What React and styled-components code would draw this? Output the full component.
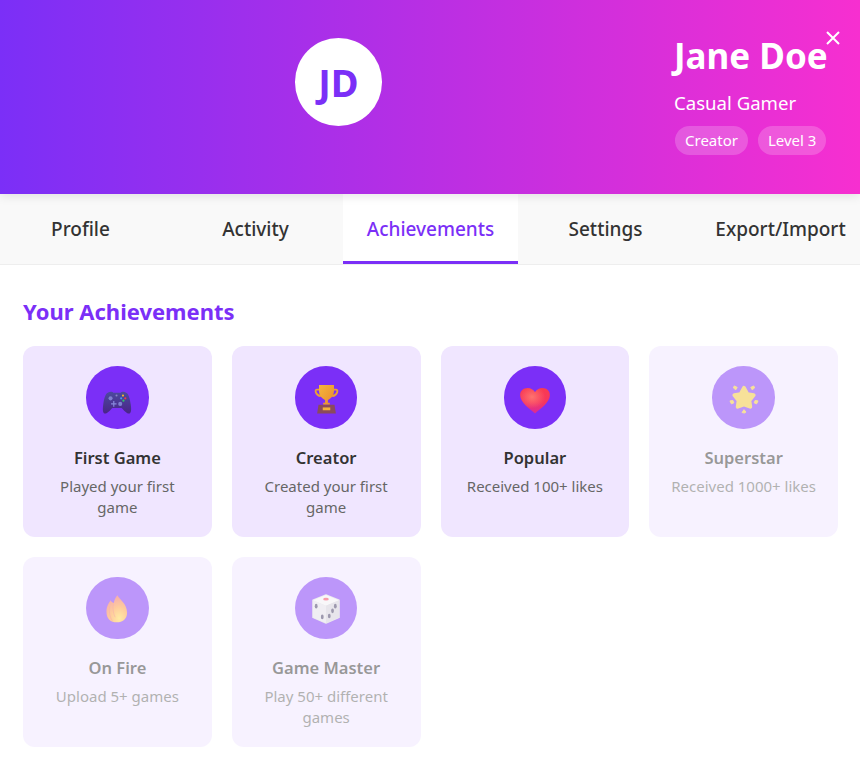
import React from 'react'
import styled, { createGlobalStyle } from 'styled-components'

const GlobalStyle = createGlobalStyle`
    html, body {
        margin: 0;
        padding: 0;
        background: #fff;
        font-family: "Noto Sans", "Open Sans", sans-serif;
    }
    * {
        box-sizing: border-box;
    }
`;

const Wrapper = styled.div`
    width: 860px;
    height: 766px;
    overflow: hidden;
    background: #fff;
`;

const Header = styled.div`
    position: relative;
    z-index: 1;
    display: flex;
    align-items: center;
    height: 194px;
    padding-right: 32px;
    color: #fff;
    background: linear-gradient(90deg, #7b2ff7, #f72fd0);
    box-shadow: 0 2px 10px rgba(0, 0, 0, 0.1);
`;

const AvatarSlot = styled.div`
    flex: 1;
    display: flex;
    justify-content: center;
    padding-left: 3px;
    padding-bottom: 30px;
`;

const Avatar = styled.div`
    display: flex;
    align-items: center;
    justify-content: center;
    width: 87.5px;
    height: 88px;
    border-radius: 50%;
    background: #fff;
    color: #7b2ff7;
    font-size: 38px;
    font-weight: 700;
`;

const Info = styled.div`
    display: flex;
    flex-direction: column;
    width: 154px;
    padding-bottom: 6px;
`;

const Name = styled.div`
    font-size: 35px;
    line-height: 46px;
    font-weight: 700;
    white-space: nowrap;
`;

const Role = styled.div`
    margin-top: 12px;
    font-size: 18.6px;
    line-height: 24px;
    white-space: nowrap;
`;

const Badges = styled.div`
    display: flex;
    gap: 10px;
    margin-top: 11px;
    padding-left: 1px;
`;

const Badge = styled.span`
    padding: 5px 10px;
    border-radius: 15px;
    background: rgba(255, 255, 255, 0.2);
    font-size: 15px;
    line-height: 19px;
    white-space: nowrap;
`;

const CloseButton = styled.div`
    position: absolute;
    top: 31px;
    right: 20px;
    width: 14px;
    height: 14px;
    color: #fff;

    svg {
        display: block;
    }
`;

const Tabs = styled.div`
    display: flex;
    justify-content: center;
    height: 71px;
    background: #f9f9f9;
    border-bottom: 1px solid #eee;
`;

const Tab = styled.div`
    display: flex;
    align-items: center;
    justify-content: center;
    flex: 0 0 175px;
    height: 70px;
    padding: 2px 0 0 1px;
    font-size: 19px;
    font-weight: 500;
    white-space: nowrap;
    color: ${props => props.$active ? '#7b2ff7' : '#333'};
    background: ${props => props.$active ? '#fff' : 'transparent'};
    border-bottom: 3px solid ${props => props.$active ? '#7b2ff7' : 'transparent'};
`;

const Content = styled.div`
    padding: 31px 22px 0 23px;
`;

const Title = styled.h2`
    margin: 0 0 20px;
    font-size: 22px;
    line-height: 30px;
    font-weight: 700;
    color: #7b2ff7;
`;

const Grid = styled.div`
    display: grid;
    grid-template-columns: repeat(4, 1fr);
    gap: 20px;
`;

const Card = styled.div`
    display: flex;
    flex-direction: column;
    align-items: center;
    height: 190.5px;
    padding: 20px;
    border-radius: 12px;
    background: #f0e6ff;
    text-align: center;
    opacity: ${props => props.$locked ? 0.5 : 1};
`;

const IconCircle = styled.div`
    display: flex;
    align-items: flex-end;
    justify-content: center;
    flex: 0 0 62.5px;
    width: 62.5px;
    padding-bottom: 15px;
    border-radius: 50%;
    background: #7b2ff7;

    svg {
        display: block;
    }
`;

const CardName = styled.div`
    margin-top: 15px;
    font-size: 16.5px;
    line-height: 28px;
    font-weight: 600;
    color: #333;
`;

const CardText = styled.div`
    margin-top: 4px;
    font-size: 15px;
    line-height: 21px;
    color: #666;
`;

const GamepadIcon = () => (
    <svg width="30" height="23" viewBox="0 0 32 25">
        <defs>
            <linearGradient id="pad" x1="0" y1="0" x2="0" y2="1">
                <stop offset="0" stopColor="#4c4a9e" />
                <stop offset="1" stopColor="#4a2488" />
            </linearGradient>
        </defs>
        <path d="M6 2 C8 .5 11 .5 12 2 L20 2 C21 .5 24 .5 26 2 C28.500 3 30 8 31 15 C31.700 20 31.500 24 29.500 24.500 C26.500 25 23.500 21 21 18.500 L11 18.500 C8.500 21 5.500 25 2.500 24.500 C.500 24 .300 20 1 15 C2 8 3.500 3 6 2 Z" fill="url(#pad)" />
        <circle cx="9" cy="8" r="2.200" fill="#7f7fd0" />
        <circle cx="19.500" cy="14" r="2.200" fill="#7f7fd0" />
        <path d="M12.500 11 V17 M9.500 14 H15.500" stroke="#8888dc" strokeWidth="1.300" />
        <circle cx="15.500" cy="5" r="1.100" fill="#8a86c4" />
        <circle cx="22.500" cy="5" r="1.200" fill="#f5b52e" />
        <circle cx="25" cy="8" r="1.200" fill="#f0354f" />
        <circle cx="20.500" cy="8" r="1.200" fill="#3f9bf0" />
        <circle cx="23" cy="10.500" r="1.200" fill="#30c46a" />
    </svg>
);

const TrophyIcon = () => (
    <svg width="25" height="30" viewBox="0 0 26 32">
        <defs>
            <linearGradient id="cup" x1="0" y1="0" x2="1" y2="1">
                <stop offset="0" stopColor="#f5b63c" />
                <stop offset="1" stopColor="#e98b2e" />
            </linearGradient>
        </defs>
        <path d="M5 6 H2.500 C.500 6 1 12 7 13 M21 6 H23.500 C25.500 6 25 12 19 13" fill="none" stroke="#eaa232" strokeWidth="2" />
        <path d="M5 1 H21 V7 C21 13 17 16 14.500 17 V20 H16.500 V22 H9.500 V20 H11.500 V17 C9 16 5 13 5 7 Z" fill="url(#cup)" />
        <path d="M3 31.500 L4.500 22 H21.500 L23 31.500 Z" fill="#8a4a5c" />
        <rect x="9" y="25" width="8" height="3" fill="#f2b23a" />
    </svg>
);

const HeartIcon = () => (
    <svg width="30" height="26" viewBox="0 0 32 28">
        <defs>
            <linearGradient id="heart" x1="0" y1="0" x2="0" y2="1">
                <stop offset="0" stopColor="#f93a50" />
                <stop offset="0.55" stopColor="#f63660" />
                <stop offset="1" stopColor="#d92a9a" />
            </linearGradient>
            <radialGradient id="heartShine" cx="0.4" cy="0.35" r="0.45">
                <stop offset="0" stopColor="#ff7a70" stopOpacity="0.9" />
                <stop offset="1" stopColor="#ff7a70" stopOpacity="0" />
            </radialGradient>
        </defs>
        <path d="M16 27.500 C10 22 0 15.500 0 7.500 C0 3 3.500 0 8 0 C11.500 0 14.500 1.800 16 4.500 C17.500 1.800 20.500 0 24 0 C28.500 0 32 3 32 7.500 C32 15.500 22 22 16 27.500 Z" fill="url(#heart)" />
        <path d="M16 27.500 C10 22 0 15.500 0 7.500 C0 3 3.500 0 8 0 C11.500 0 14.500 1.800 16 4.500 C17.500 1.800 20.500 0 24 0 C28.500 0 32 3 32 7.500 C32 15.500 22 22 16 27.500 Z" fill="url(#heartShine)" />
    </svg>
);

const StarIcon = () => (
    <svg width="30" height="30" viewBox="0 0 30 31">
        <path d="M15 4 L18.500 10.500 L25 11.500 L20.500 17 L21.500 23.500 L15 21 L8.500 23.500 L9.500 17 L5 11.500 L11.500 10.500 Z" fill="#f1c535" stroke="#f1c535" strokeWidth="4" strokeLinejoin="round" />
        <path d="M5 2 L8 3.500 L6.500 6 L4 4 Z M25 2 L22 3.500 L23.500 6 L26 4 Z M.5 17.500 L3.500 17 L4.500 19.500 L2 20.500 Z M29.500 17.500 L26.500 17 L25.500 19.500 L28 20.500 Z M15 26.500 L17 29 L15.500 30 L13 29.500 Z" fill="#f1c535" stroke="#f1c535" strokeLinejoin="round" />
    </svg>
);

const FlameIcon = () => (
    <svg width="22" height="30" viewBox="0 0 24 30">
        <defs>
            <radialGradient id="flame" cx="0.62" cy="0.85" r="0.8">
                <stop offset="0" stopColor="#ffd84a" />
                <stop offset="0.5" stopColor="#ff9d3c" />
                <stop offset="1" stopColor="#f0635a" />
            </radialGradient>
        </defs>
        <path d="M12.500 0 C14 4 23 9 23 19 C23 26 18 29.500 12 29.500 C5 29.500 .500 26 .500 18 C.500 12 3 9 5 5.500 C6 7.500 7.500 8 8.500 8.500 C9 5 10.500 2 12.500 0 Z" fill="url(#flame)" />
        <path d="M4 12 C3 18 4 24 7 28 M8 9 C7 15 8 20 10 24" fill="none" stroke="#f0635a" strokeOpacity="0.6" strokeWidth="1" />
    </svg>
);

const DiceIcon = () => (
    <svg width="28" height="30" viewBox="0 0 30 32">
        <path d="M15 1 L29 6.500 V25 L15 31 L1 25 V6.500 Z" fill="#d6d2de" stroke="#d6d2de" strokeWidth="1.500" strokeLinejoin="round" />
        <path d="M15 1 L29 6.500 L15 12.500 L1 6.500 Z" fill="#f2f0f5" />
        <path d="M1 6.500 L15 12.500 V31 L1 25 Z" fill="#e2dfe8" />
        <path d="M29 6.500 L15 12.500 V31 L29 25 Z" fill="#d0ccd8" />
        <ellipse cx="15" cy="5.500" rx="3" ry="1.500" fill="#f4395a" />
        <ellipse cx="4.500" cy="13" rx="1.500" ry="2.500" fill="#3d3560" />
        <ellipse cx="11" cy="24.500" rx="1.500" ry="2.500" fill="#3d3560" />
        <ellipse cx="25" cy="13" rx="1.500" ry="2.500" fill="#3d3560" />
        <ellipse cx="22" cy="18" rx="1.500" ry="2.500" fill="#3d3560" />
        <ellipse cx="18.500" cy="23.500" rx="1.500" ry="2.500" fill="#3d3560" />
    </svg>
);

const tabs = [
    { label: 'Profile' },
    { label: 'Activity' },
    { label: 'Achievements', active: true },
    { label: 'Settings' },
    { label: 'Export/Import' },
];

const achievements = [
    { name: 'First Game', text: 'Played your first game', icon: <GamepadIcon /> },
    { name: 'Creator', text: 'Created your first game', icon: <TrophyIcon /> },
    { name: 'Popular', text: 'Received 100+ likes', icon: <HeartIcon /> },
    { name: 'Superstar', text: 'Received 1000+ likes', icon: <StarIcon />, locked: true },
    { name: 'On Fire', text: 'Upload 5+ games', icon: <FlameIcon />, locked: true },
    { name: 'Game Master', text: 'Play 50+ different games', icon: <DiceIcon />, locked: true },
];

export default function App() {
    return (
        <Wrapper>
            <GlobalStyle />
            <Header>
                <CloseButton>
                    <svg width="14" height="14" viewBox="0 0 14 14">
                        <path d="M1 1 L13 13 M13 1 L1 13" stroke="currentColor" strokeWidth="2" />
                    </svg>
                </CloseButton>
                <AvatarSlot>
                    <Avatar>JD</Avatar>
                </AvatarSlot>
                <Info>
                    <Name>Jane Doe</Name>
                    <Role>Casual Gamer</Role>
                    <Badges>
                        <Badge>Creator</Badge>
                        <Badge>Level 3</Badge>
                    </Badges>
                </Info>
            </Header>
            <Tabs>
                {tabs.map(tab => (
                    <Tab key={tab.label} $active={tab.active}>{tab.label}</Tab>
                ))}
            </Tabs>
            <Content>
                <Title>Your Achievements</Title>
                <Grid>
                    {achievements.map(item => (
                        <Card key={item.name} $locked={item.locked}>
                            <IconCircle>{item.icon}</IconCircle>
                            <CardName>{item.name}</CardName>
                            <CardText>{item.text}</CardText>
                        </Card>
                    ))}
                </Grid>
            </Content>
        </Wrapper>
    );
}
